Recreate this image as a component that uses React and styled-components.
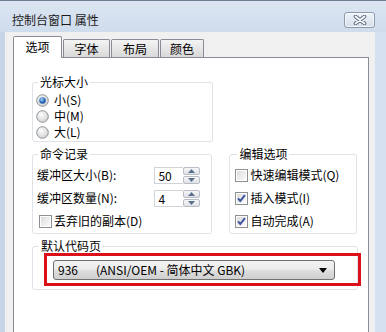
import styled, { createGlobalStyle } from "styled-components";

const GlobalStyle = createGlobalStyle`
  html, body {
    margin: 0;
    padding: 0;
    background: #d3e0ef;
  }
  * {
    box-sizing: border-box;
  }
`;

const FONT = `"Noto Sans CJK SC", "Noto Sans", sans-serif`;

const Window = styled.div`
  width: 386px;
  height: 332px;
  overflow: hidden;
  display: flex;
  flex-direction: column;
  padding: 0 11px 0 5px;
  background: linear-gradient(90deg, #c6d5e7 0%, #d7e3f1 50%, #d4e1f0 100%);
  border-top: 1px solid #6f7f92;
  font-family: ${FONT};
  font-size: 12px;
  color: #000;
`;

const TitleBar = styled.div`
  height: 31px;
  flex: none;
  display: flex;
  align-items: center;
  justify-content: space-between;
  margin: 0 -11px 0 -5px;
  padding: 0 11px 0 12px;
  background: linear-gradient(180deg, #dce6f2 0%, #cfdcec 100%);
`;

const Title = styled.span`
  font-size: 12px;
  line-height: 14px;
  color: #1b1b1b;
  margin-top: 6px;
`;

const CloseButton = styled.button`
  width: 31px;
  height: 16px;
  margin-top: 6px;
  padding: 0;
  display: flex;
  align-items: center;
  justify-content: center;
  border: 1px solid #8d9aab;
  border-radius: 3px;
  background: linear-gradient(180deg, #eef3f8 0%, #d5dee9 100%);
  box-shadow: inset 0 0 0 1px rgba(255, 255, 255, 0.6);
`;

const Body = styled.div`
  flex: 1;
  display: flex;
  flex-direction: column;
  background: #f0f0f0;
  padding: 4px 6px 0 8px;
`;

const TabStrip = styled.div`
  display: flex;
  align-items: flex-end;
  height: 21px;
  position: relative;
  z-index: 1;
`;

const Tab = styled.div`
  width: ${(p) => p.$w}px;
  height: ${(p) => (p.$active ? 22 : 18)}px;
  margin-bottom: ${(p) => (p.$active ? -1 : 0)}px;
  display: flex;
  align-items: center;
  justify-content: center;
  padding-bottom: ${(p) => (p.$active ? 2 : 0)}px;
  border: 1px solid #898c95;
  border-bottom: none;
  border-radius: 2px 2px 0 0;
  background: ${(p) =>
    p.$active ? "#ffffff" : "linear-gradient(180deg, #f4f4f4 0%, #e6e6e6 50%, #d9d9d9 100%)"};
  font-size: 12px;
  line-height: 14px;
  & + & {
    margin-left: ${(p) => (p.$active ? 0 : 1)}px;
  }
`;

const Panel = styled.div`
  flex: 1;
  background: #ffffff;
  border: 1px solid #898c95;
  border-bottom: none;
  padding: 17px 11px 0 18px;
`;

const Group = styled.fieldset`
  margin: ${(p) => p.$top || 0}px 0 0 0;
  padding: ${(p) => p.$pad || "0 4px 1px 3px"};
  width: ${(p) => p.$w}px;
  border: 1px solid #dde3e8;
  border-radius: 3px;
  min-width: 0;
`;

const Legend = styled.legend`
  margin-left: ${(p) => p.$indent || 2}px;
  padding: 0 2px;
  font-size: 12px;
  line-height: 14px;
  color: #000;
`;

const Stack = styled.div`
  display: flex;
  flex-direction: column;
  gap: ${(p) => p.$gap || 0}px;
  padding-top: 3px;
`;

const Row = styled.div`
  height: ${(p) => p.$h || 16}px;
  display: flex;
  align-items: center;
  gap: ${(p) => p.$gap || 5}px;
  margin-left: ${(p) => p.$indent || 0}px;
  line-height: 14px;
  white-space: nowrap;
`;

const Columns = styled.div`
  display: flex;
  gap: 17px;
  align-items: stretch;
`;

const FieldLabel = styled.span`
  flex: 1;
`;

const Spin = styled.div`
  display: flex;
  align-items: center;
  margin-right: 11px;
`;

const SpinInput = styled.div`
  width: 29px;
  height: 17px;
  border: 1px solid #d0d3d8;
  border-right: none;
  background: #fff;
  padding-left: 3px;
  font-size: 12px;
  line-height: 15px;
`;

const SpinButtons = styled.div`
  display: flex;
  flex-direction: column;
  gap: 1px;
`;

const SpinButton = styled.div`
  width: 17px;
  height: 8px;
  display: flex;
  align-items: center;
  justify-content: center;
  border: 1px solid #b9bdc6;
  border-radius: 2px;
  background: linear-gradient(180deg, #f7f7f7 0%, #dfe1e5 100%);
`;

const RedFrame = styled.div`
  margin: 0 -4px 0 11px;
  padding: 4px 0 3px 6px;
  border: 3px solid #dc1018;
`;

const Combo = styled.div`
  width: 282px;
  height: 20px;
  display: flex;
  align-items: center;
  padding: 0 7px 0 4px;
  border: 1px solid #707070;
  border-radius: 3px;
  background: linear-gradient(180deg, #f3f3f3 0%, #ebebeb 45%, #dddddd 55%, #cfcfcf 100%);
  font-size: 12px;
  line-height: 14px;
  white-space: nowrap;
`;

const CodeNumber = styled.span`
  width: 38px;
  flex: none;
`;

const CodeName = styled.span`
  flex: 1;
`;

const Radio = ({ checked }) => (
  <svg width="13" height="13" viewBox="0 0 13 13">
    <defs>
      <radialGradient id="radioOff" cx="40%" cy="35%" r="70%">
        <stop offset="0%" stopColor="#fdfdfd" />
        <stop offset="100%" stopColor="#cfcfcf" />
      </radialGradient>
      <radialGradient id="radioOn" cx="40%" cy="35%" r="70%">
        <stop offset="0%" stopColor="#a8d0f5" />
        <stop offset="60%" stopColor="#2f6fc0" />
        <stop offset="100%" stopColor="#1d4f98" />
      </radialGradient>
    </defs>
    <circle cx="6.5" cy="6.5" r="5.8" fill="url(#radioOff)" stroke="#8f9297" />
    {checked && <circle cx="6.5" cy="6.5" r="3.3" fill="url(#radioOn)" />}
  </svg>
);

const Check = ({ checked }) => (
  <svg width="13" height="13" viewBox="0 0 13 13">
    <defs>
      <linearGradient id="checkBg" x1="0" y1="0" x2="1" y2="1">
        <stop offset="0%" stopColor="#dcdcdc" />
        <stop offset="100%" stopColor="#fbfbfb" />
      </linearGradient>
    </defs>
    <rect x="0.5" y="0.5" width="12" height="12" fill="#fff" stroke="#8e8f91" />
    <rect x="2" y="2" width="9" height="9" fill="url(#checkBg)" />
    {checked && (
      <path d="M3 6.3 L5.3 9 L10 3.2" fill="none" stroke="#3f56a0" strokeWidth="2" />
    )}
  </svg>
);

const Arrow = ({ up }) => (
  <svg width="7" height="4" viewBox="0 0 7 4">
    <path d={up ? "M0 4 L3.5 0 L7 4 Z" : "M0 0 L3.5 4 L7 0 Z"} fill="#5b6f8e" />
  </svg>
);

const SpinBox = ({ value }) => (
  <Spin>
    <SpinInput>{value}</SpinInput>
    <SpinButtons>
      <SpinButton>
        <Arrow up />
      </SpinButton>
      <SpinButton>
        <Arrow />
      </SpinButton>
    </SpinButtons>
  </Spin>
);

const tabs = [
  { label: "选项", w: 49, active: true },
  { label: "字体", w: 47 },
  { label: "布局", w: 48 },
  { label: "颜色", w: 44 },
];

const App = () => {
  return (
    <>
      <GlobalStyle />
      <Window>
        <TitleBar>
          <Title>控制台窗口 属性</Title>
          <CloseButton aria-label="关闭">
            <svg width="14" height="10" viewBox="0 0 14 10">
              <path d="M2.5 1.5 L11.5 8.5 M11.5 1.5 L2.5 8.5" stroke="#56657a" strokeWidth="3.6" strokeLinecap="round" />
              <path d="M2.5 1.5 L11.5 8.5 M11.5 1.5 L2.5 8.5" stroke="#ffffff" strokeWidth="1.8" strokeLinecap="round" />
            </svg>
          </CloseButton>
        </TitleBar>
        <Body>
          <TabStrip>
            {tabs.map((t) => (
              <Tab key={t.label} $w={t.w} $active={t.active}>
                {t.label}
              </Tab>
            ))}
          </TabStrip>
          <Panel>
            <Group $w={181}>
              <Legend $indent={2}>光标大小</Legend>
              <Stack>
                <Row>
                  <Radio checked />
                  小(S)
                </Row>
                <Row>
                  <Radio />
                  中(M)
                </Row>
                <Row>
                  <Radio />
                  大(L)
                </Row>
              </Stack>
            </Group>

            <Columns>
              <Group $w={181} $top={5} $pad="0 0 1px 4px">
                <Legend $indent={1}>命令记录</Legend>
                <Stack $gap={1}>
                  <Row $h={22}>
                    <FieldLabel>缓冲区大小(B):</FieldLabel>
                    <SpinBox value="50" />
                  </Row>
                  <Row $h={22}>
                    <FieldLabel>缓冲区数量(N):</FieldLabel>
                    <SpinBox value="4" />
                  </Row>
                  <Row $h={22} $gap={2} $indent={2}>
                    <Check />
                    丢弃旧的副本(D)
                  </Row>
                </Stack>
              </Group>

              <Group $w={128} $top={5} $pad="0 0 1px 5px">
                <Legend $indent={0}>编辑选项</Legend>
                <Stack $gap={1}>
                  <Row $h={22} $gap={2}>
                    <Check />
                    快速编辑模式(Q)
                  </Row>
                  <Row $h={22} $gap={2}>
                    <Check checked />
                    插入模式(I)
                  </Row>
                  <Row $h={22} $gap={2}>
                    <Check checked />
                    自动完成(A)
                  </Row>
                </Stack>
              </Group>
            </Columns>

            <Group $w={326} $top={5} $pad="0 0 3px 0">
              <Legend $indent={6}>默认代码页</Legend>
              <RedFrame>
                <Combo>
                  <CodeNumber>936</CodeNumber>
                  <CodeName>(ANSI/OEM - 简体中文 GBK)</CodeName>
                  <svg width="8" height="5" viewBox="0 0 8 5">
                    <path d="M0 0 L8 0 L4 5 Z" fill="#000" />
                  </svg>
                </Combo>
              </RedFrame>
            </Group>
          </Panel>
        </Body>
      </Window>
    </>
  );
};

export default App;
